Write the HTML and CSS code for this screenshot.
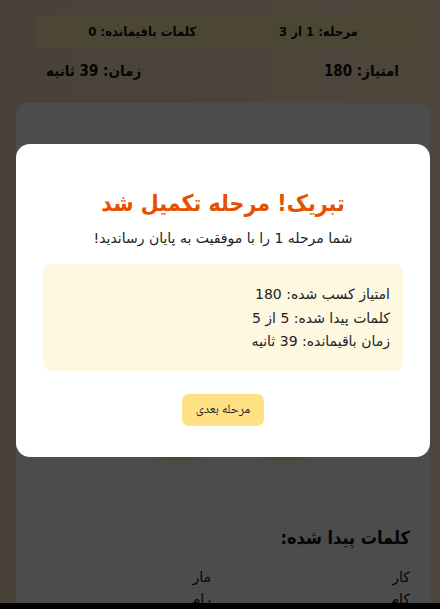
FILE: index.html
```html
<!DOCTYPE html>
<html lang="fa" dir="rtl">
<head>
<meta charset="utf-8">
<title>بازی کلمات</title>
<link rel="stylesheet" href="styles.css">
</head>
<body>
<div class="page">
  <div class="level-bar">
    <span>مرحله: 1 از 3</span>
    <span>کلمات باقیمانده: 0</span>
  </div>
  <div class="stats-row">
    <span>امتیاز: 180</span>
    <span>زمان: 39 ثانیه</span>
  </div>
  <div class="card">
    <div class="board">
      <div class="letter">ک</div>
      <div class="letter">ر</div>
    </div>
    <h3 class="words-title">کلمات پیدا شده:</h3>
    <div class="words">
      <div class="word">کار</div>
      <div class="word">مار</div>
      <div class="word">کام</div>
      <div class="word">رام</div>
      <div class="word">مرکا</div>
    </div>
  </div>
</div>
<div class="bottom-bar"></div>
<div class="overlay">
  <div class="modal">
    <h2 class="modal-title">تبریک! مرحله تکمیل شد</h2>
    <p class="modal-sub">شما مرحله 1 را با موفقیت به پایان رساندید!</p>
    <div class="summary">
      <div>امتیاز کسب شده: 180</div>
      <div>کلمات پیدا شده: 5 از 5</div>
      <div>زمان باقیمانده: 39 ثانیه</div>
    </div>
    <button class="next-btn">مرحله بعدی</button>
  </div>
</div>
</body>
</html>
```

FILE: styles.css
```css
html, body {
  margin: 0;
  height: 100%;
  overflow: hidden;
}
body {
  background: linear-gradient(to right, #f5dcbc, #ffecc8);
  font-family: "DejaVu Sans", sans-serif;
  color: #111;
}
.page {
  padding: 15px 10px 0 16px;
}
.level-bar {
  margin: 0 19px;
  background: #ffecb3;
  display: flex;
  justify-content: space-around;
  padding: 8px 12px;
  font-family: "DejaVu Sans Condensed", "DejaVu Sans", sans-serif;
  font-size: 13px;
  line-height: 17px;
  font-weight: bold;
}
.stats-row {
  margin: 0 19px;
  display: flex;
  justify-content: space-between;
  padding: 14px 12px 14px 11px;
  font-family: "DejaVu Sans Condensed", "DejaVu Sans", sans-serif;
  font-size: 15px;
  line-height: 18px;
  font-weight: bold;
}
.card {
  margin-top: 9px;
  background: #fff;
  border-radius: 12px;
  padding: 20px 20px 20px 16px;
}
.board {
  height: 329px;
  padding: 0 0 61px 23px;
  display: flex;
  justify-content: center;
  align-items: flex-end;
  gap: 55px;
}
.letter {
  width: 50px;
  height: 50px;
  border-radius: 50%;
  background: #ffe082;
  box-shadow: 0 6px 12px rgba(255, 193, 7, 0.8);
  display: flex;
  align-items: center;
  justify-content: center;
  font-size: 20px;
  font-weight: bold;
}
.words-title {
  margin: 14px 0 18px;
  font-family: "DejaVu Sans Condensed", "DejaVu Sans", sans-serif;
  font-size: 18px;
  line-height: 22px;
  font-weight: bold;
}
.words {
  display: grid;
  grid-template-columns: 1fr 1fr;
  column-gap: 20px;
}
.word {
  padding: 1px 0;
  line-height: 19px;
  font-size: 14px;
  border-bottom: 1px solid #eee;
}
.bottom-bar {
  position: fixed;
  left: 0;
  right: 0;
  bottom: 0;
  height: 6px;
  background: #000;
}
.overlay {
  position: fixed;
  inset: 0;
  background: rgba(0, 0, 0, 0.7);
  display: flex;
  align-items: center;
  justify-content: center;
  padding: 0 10px 8px 16px;
}
.modal {
  width: 100%;
  background: #fff;
  border-radius: 14px;
  padding: 30px 27px 31px;
  text-align: center;
}
.modal-title {
  margin: 16px 0 12px;
  font-family: "DejaVu Sans Condensed", "DejaVu Sans", sans-serif;
  font-size: 23px;
  line-height: 26px;
  color: #e65100;
  font-weight: bold;
}
.modal-sub {
  margin: 0 0 16px;
  font-size: 14px;
  line-height: 20px;
  color: #222;
}
.summary {
  background: #fff8e1;
  border-radius: 8px;
  padding: 19px 13px 17px;
  text-align: right;
  font-size: 14px;
  line-height: 23.5px;
  color: #222;
}
.next-btn {
  margin-top: 23px;
  background: #ffe082;
  border: none;
  border-radius: 7px;
  padding: 0 14px;
  height: 32px;
  font-family: "Noto Naskh Arabic", "Noto Sans Arabic", sans-serif;
  font-size: 13px;
  color: #222;
}
```
